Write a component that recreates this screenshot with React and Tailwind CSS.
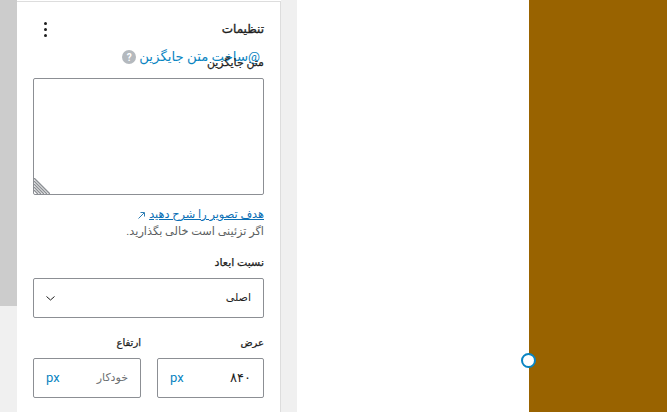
import React from "react";

export default function App() {
  return (
    <div className="flex h-[412px] w-[667px] overflow-hidden bg-white font-['Roboto','DejaVu_Sans',sans-serif] text-[#1e1e1e]">
      <div className="flex w-[17px] shrink-0 flex-col bg-[#f0f0f0]">
        <div className="h-[306px] bg-[#cccccc]"></div>
      </div>
      <div dir="rtl" className="mt-[1px] w-[264px] shrink-0 border-t border-r border-[#dddddd] bg-white pt-[17px] pr-[16px] pl-[16px]">
        <div className="flex h-[20px] items-center justify-between">
          <h2 className="text-[12px] leading-[20px] [-webkit-text-stroke:0.35px_#1e1e1e]">تنظیمات</h2>
          <div className="flex w-[24px] flex-col items-center gap-[3px]">
            <span className="h-[3px] w-[3px] rounded-full bg-[#1e1e1e]"></span>
            <span className="h-[3px] w-[3px] rounded-full bg-[#1e1e1e]"></span>
            <span className="h-[3px] w-[3px] rounded-full bg-[#1e1e1e]"></span>
          </div>
        </div>
        <div className="mt-[8px] flex h-[20px] items-center gap-[3px] pr-[4px] text-[#0a85c2]">
          <span className="text-[13.3px] leading-[20px]">@ساخت متن جایگزین</span>
          <span className="flex h-[14px] w-[14px] items-center justify-center rounded-full bg-[#b4b9be] text-[10px] font-bold text-white">?</span>
        </div>
        <div className="mt-[-12px] h-[16px] text-[11px] leading-[16px] [-webkit-text-stroke:0.25px_#1e1e1e]">متن جایگزین</div>
        <div className="relative mt-[7px] h-[117px] rounded-[2px] border border-[#8c8f94] bg-white">
          <svg className="absolute bottom-0 left-0" width="16" height="16" viewBox="0 0 16 16">
            <path d="M0 0L16 16M0 3L13 16M0 6L10 16M0 9L7 16M0 12L4 16" stroke="#8c8f94" strokeWidth="1.4" fill="none" />
          </svg>
        </div>
        <div className="mt-[12px] flex items-center gap-[3px] text-[11.3px] leading-[16px] text-[#0a6fb5]">
          <span className="underline">هدف تصویر را شرح دهید</span>
          <svg width="9" height="9" viewBox="0 0 9 9"><path d="M1.5 7.5L7 2M3.5 1.5H7.5V5.5" stroke="#2f7fb5" strokeWidth="1" fill="none" /></svg>
        </div>
        <p className="mt-[1px] text-[11.3px] leading-[16px] text-[#5c5f62]">اگر تزئینی است خالی بگذارید.</p>
        <div className="mt-[15px] h-[16px] text-[11px] leading-[16px] [-webkit-text-stroke:0.25px_#1e1e1e]">نسبت ابعاد</div>
        <div className="mt-[7px] flex h-[40px] items-center justify-between rounded-[2px] border border-[#8c8f94] px-[12px] text-[11px]">
          <span>اصلی</span>
          <svg width="9" height="5" viewBox="0 0 9 5"><path d="M0.5 0.5L4.5 4L8.5 0.5" stroke="#1e1e1e" strokeWidth="1" fill="none" /></svg>
        </div>
        <div className="mt-[17px] flex gap-[16px]">
          <div className="w-[107px]">
            <div className="h-[16px] text-[10px] leading-[16px] [-webkit-text-stroke:0.25px_#1e1e1e]">عرض</div>
            <div className="mt-[7px] flex h-[40px] items-center justify-between rounded-[2px] border border-[#8c8f94] px-[12px] text-[13px]">
              <span>۸۴۰</span>
              <span dir="ltr" className="text-[#0a85c2]">px</span>
            </div>
          </div>
          <div className="w-[108px]">
            <div className="h-[16px] text-[10px] leading-[16px] [-webkit-text-stroke:0.25px_#1e1e1e]">ارتفاع</div>
            <div className="mt-[7px] flex h-[40px] items-center justify-between rounded-[2px] border border-[#8c8f94] px-[12px] text-[13px]">
              <span className="text-[11px] text-[#6b6e71]">خودکار</span>
              <span dir="ltr" className="text-[#0a85c2]">px</span>
            </div>
          </div>
        </div>
      </div>
      <div className="w-[16px] shrink-0 bg-[#f0f0f0]"></div>
      <div className="relative flex-1 bg-white">
        <div className="absolute top-0 right-0 h-full w-[138px] bg-[#996300]"></div>
        <div className="absolute top-[353px] left-[224px] h-[15px] w-[15px] rounded-full border-[2px] border-[#0a85c2] bg-white"></div>
      </div>
    </div>
  );
}
